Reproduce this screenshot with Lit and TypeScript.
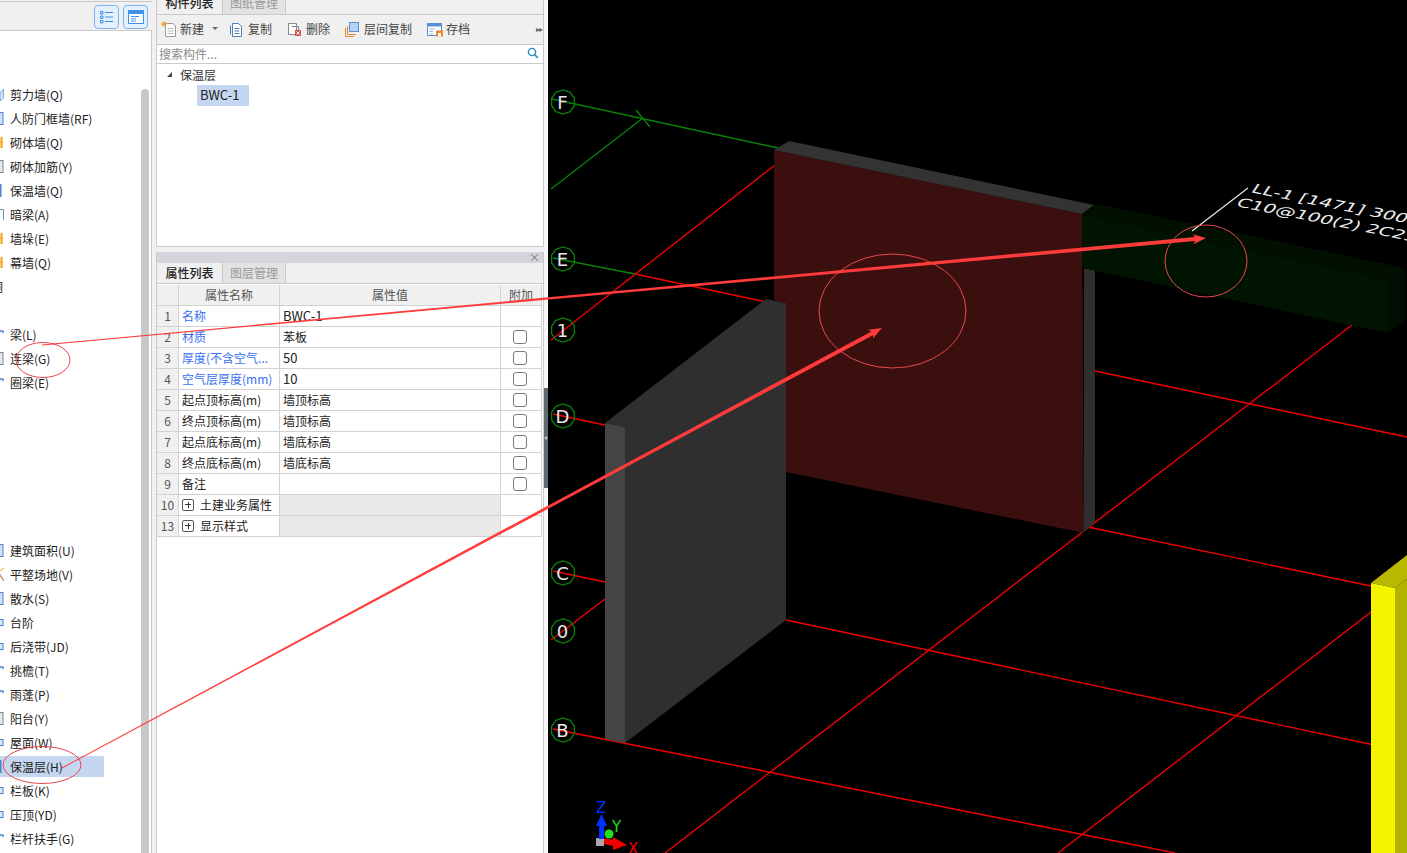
import { LitElement, html, css, svg } from 'lit';
import { customElement } from 'lit/decorators.js';

type LeftRow = { label?: string; icon?: string; selected?: boolean; clipped?: boolean };

const blank: LeftRow = {};

const LEFT_ROWS: LeftRow[] = [
  { label: '剪力墙(Q)', icon: 'shear' },
  { label: '人防门框墙(RF)', icon: 'box' },
  { label: '砌体墙(Q)', icon: 'brick' },
  { label: '砌体加筋(Y)', icon: 'greybox' },
  { label: '保温墙(Q)', icon: 'bar' },
  { label: '暗梁(A)', icon: 'cap' },
  { label: '墙垛(E)', icon: 'brick' },
  { label: '幕墙(Q)', icon: 'brick' },
  { label: '洞', clipped: true },
  blank,
  { label: '梁(L)', icon: 'tick' },
  { label: '连梁(G)', icon: 'greybox' },
  { label: '圈梁(E)', icon: 'tick' },
  blank, blank, blank, blank, blank, blank,
  { label: '建筑面积(U)', icon: 'box' },
  { label: '平整场地(V)', icon: 'site' },
  { label: '散水(S)', icon: 'box' },
  { label: '台阶', icon: 'small' },
  { label: '后浇带(JD)', icon: 'small' },
  { label: '挑檐(T)', icon: 'tick' },
  { label: '雨蓬(P)', icon: 'tick' },
  { label: '阳台(Y)', icon: 'greybox' },
  { label: '屋面(W)', icon: 'small' },
  { label: '保温层(H)', icon: 'bar', selected: true },
  { label: '栏板(K)', icon: 'small' },
  { label: '压顶(YD)', icon: 'small' },
  { label: '栏杆扶手(G)', icon: 'tick' },
];

type PropRow = {
  no: number;
  name: string;
  value?: string;
  blue?: boolean;
  check?: boolean;
  group?: boolean;
  latin?: boolean;
};

const PROPS: PropRow[] = [
  { no: 1, name: '名称', value: 'BWC-1', blue: true, latin: true },
  { no: 2, name: '材质', value: '苯板', blue: true, check: true },
  { no: 3, name: '厚度(不含空气...', value: '50', blue: true, check: true, latin: true },
  { no: 4, name: '空气层厚度(mm)', value: '10', blue: true, check: true, latin: true },
  { no: 5, name: '起点顶标高(m)', value: '墙顶标高', check: true },
  { no: 6, name: '终点顶标高(m)', value: '墙顶标高', check: true },
  { no: 7, name: '起点底标高(m)', value: '墙底标高', check: true },
  { no: 8, name: '终点底标高(m)', value: '墙底标高', check: true },
  { no: 9, name: '备注', check: true },
  { no: 10, name: '土建业务属性', group: true },
  { no: 13, name: '显示样式', group: true },
];

// grid lines of the 3D view, page coordinates
const RED_LINES = [
  [551, 340, 775, 165],
  [635, 274, 766, 302],
  [553, 414, 605, 425],
  [553, 571, 605, 582],
  [551, 640, 605, 599],
  [553, 729, 1175, 853],
  [1352, 325, 665, 853],
  [1371, 612, 1058, 853],
  [1095, 371, 1407, 437],
  [1088, 527, 1371, 586],
  [786, 620, 1407, 752],
];
const GREEN_LINES = [
  [552, 99, 778, 148],
  [551, 189, 643, 118],
  [636, 110, 650, 127],
  [553, 258, 635, 274],
];
const BUBBLES: [string, number][] = [
  ['F', 102], ['E', 259], ['1', 330], ['D', 416], ['C', 573], ['0', 631], ['B', 730],
];

function octagon(cx: number, cy: number, r: number) {
  const pts: string[] = [];
  for (let i = 0; i < 10; i++) {
    const a = (Math.PI * 2 * i) / 10 + Math.PI / 10;
    pts.push(`${(cx + r * Math.cos(a)).toFixed(1)},${(cy + r * Math.sin(a)).toFixed(1)}`);
  }
  return pts.join(' ');
}

// tapered hand-drawn arrow: thin tail, thick shaft, small head
function arrow(x1: number, y1: number, x2: number, y2: number) {
  const len = Math.hypot(x2 - x1, y2 - y1);
  const ux = (x2 - x1) / len;
  const uy = (y2 - y1) / len;
  const nx = -uy;
  const ny = ux;
  const p = (along: number, off: number) =>
    `${(x1 + ux * along + nx * off).toFixed(1)},${(y1 + uy * along + ny * off).toFixed(1)}`;
  const neck = len - 11;
  return [
    p(0, 0.4), p(neck, 2), p(neck - 2, 5), p(len, 0), p(neck - 2, -5), p(neck, -2), p(0, -0.4),
  ].join(' ');
}

function leftIcon(kind?: string) {
  switch (kind) {
    case 'shear':
      return svg`<path d="M0 7 3.5 3V12L0 15Z" fill="#d6e6f8" stroke="#7ba6d8"/>`;
    case 'box':
      return svg`<rect x="-4" y="2.5" width="7" height="12" fill="#cfe0f5" stroke="#4a86d0"/>`;
    case 'greybox':
      return svg`<rect x="-4" y="2.5" width="7" height="12" fill="#e8e8e8" stroke="#7c8794"/>`;
    case 'brick':
      return svg`<rect x="-2" y="3" width="5" height="11" fill="#fbd07a"/><path d="M0 8.5H3M1.5 3V14" stroke="#f0a020"/>`;
    case 'bar':
      return svg`<rect x="0" y="2" width="1.5" height="13" fill="#4a86d0"/>`;
    case 'cap':
      return svg`<path d="M0 3.5H3.5V14" fill="none" stroke="#6c8db5"/>`;
    case 'tick':
      return svg`<path d="M0 5H3V7" fill="none" stroke="#4a86d0" stroke-width="1.4"/>`;
    case 'small':
      return svg`<rect x="-3" y="5.5" width="6" height="6" fill="#dbe8f7" stroke="#4a86d0"/>`;
    case 'site':
      return svg`<path d="M0 5 4 2M0 10 4 15" fill="none" stroke="#f0a020"/><path d="M0 8 4 15" stroke="#8a97a8"/>`;
    default:
      return svg``;
  }
}

const TOOLS: { label: string; icon: unknown; caret?: boolean }[] = [
  {
    label: '新建',
    caret: true,
    icon: svg`<path d="M4.5 2.5H12L14.5 5V15.5H4.5Z" fill="#fff" stroke="#9a9a9a"/><path d="M6.5 7.5H12.5M6.5 10H12.5M6.5 12.5H12.5" stroke="#bbb"/><path d="M3 0V6M0 3H6M1 1 5 5M5 1 1 5" stroke="#f59a23"/>`,
  },
  {
    label: '复制',
    icon: svg`<path d="M3.5 2.5H9.5L12.5 5.5V15.5H3.5Z" fill="#fff" stroke="#4d7fb8"/><path d="M1.5 4.5V13.5M5.5 7.5H10.5M5.5 10H10.5M5.5 12.5H10.5" stroke="#4d7fb8"/>`,
  },
  {
    label: '删除',
    icon: svg`<path d="M1.5 2.5H9.5V13.5H1.5Z" fill="#fff" stroke="#8a8a8a"/><path d="M4.5 5.5H11.5V9" fill="none" stroke="#8a8a8a"/><rect x="8" y="9" width="6" height="6" fill="#d9534f"/><path d="M9.5 10.5 12.5 13.5M12.5 10.5 9.5 13.5" stroke="#fff"/>`,
  },
  {
    label: '层间复制',
    icon: svg`<path d="M.5 7V15.5H9" fill="none" stroke="#e8862a"/><path d="M2.5 5V13.5H11" fill="none" stroke="#e8862a"/><rect x="4.5" y="1.5" width="9" height="9" fill="#b5d3f7" stroke="#5b8fd0"/>`,
  },
  {
    label: '存档',
    icon: svg`<rect x=".5" y="2.5" width="14" height="12" fill="#fff" stroke="#5b8fd0"/><rect x=".5" y="2.5" width="14" height="3" fill="#5b8fd0"/><path d="M2.5 8H8M2.5 10.5H6M2.5 13H6" stroke="#8fb3dc"/><rect x="9" y="9.5" width="7" height="6" fill="#e8862a"/><rect x="11" y="12" width="3" height="3.5" fill="#fff"/>`,
  },
];

@customElement('app-root')
export class AppRoot extends LitElement {
  static styles = css`
    :host {
      display: block;
      position: relative;
      width: 1407px;
      height: 853px;
      overflow: hidden;
      background: #f1f1f1;
      font-family: 'Noto Sans CJK SC', 'Noto Sans', sans-serif;
      font-size: 12px;
      color: #222;
    }
    .shell {
      display: flex;
      height: 853px;
    }

    /* left tree */
    .left {
      width: 152px;
      flex: none;
      display: flex;
      flex-direction: column;
      overflow: hidden;
    }
    .left-bar {
      height: 30px;
      flex: none;
      box-sizing: border-box;
      margin-top: 1px;
      border-top: 1px solid #c9c9c9;
      border-bottom: 1px solid #c9c9c9;
      background: #f0f0f0;
      display: flex;
      justify-content: flex-end;
      align-items: center;
      gap: 4px;
      padding: 2px 4px 0 0;
    }
    .mode {
      width: 25px;
      height: 24px;
      box-sizing: border-box;
      border: 1px solid #7db4ee;
      border-radius: 4px;
      background: #e3f0fd;
      display: flex;
      align-items: center;
      justify-content: center;
    }
    .left-body {
      flex: 1;
      position: relative;
      background: #fff;
      border-right: 1px solid #c9c9c9;
      padding-top: 51px;
      overflow: hidden;
    }
    .left-row {
      display: flex;
      align-items: center;
      width: 104px;
      height: 24px;
      white-space: nowrap;
    }
    .left-row.selected {
      background: linear-gradient(#fff 2px, #c5d7f0 2px, #c5d7f0 23px, #fff 23px);
    }
    .left-row svg {
      flex: none;
      width: 10px;
      height: 17px;
    }
    .left-row .clip {
      margin-left: -9px;
    }
    .left-scroll {
      position: absolute;
      top: 58px;
      bottom: 0;
      left: 141px;
      width: 8px;
      border-radius: 4px 4px 0 0;
      background: #c8c8c8;
    }

    /* middle panels */
    .mid {
      width: 388px;
      flex: none;
      margin-left: 4px;
      display: flex;
      flex-direction: column;
      box-sizing: border-box;
    }
    .panel {
      border: 1px solid #c9c9c9;
      border-top: none;
      background: #fff;
      box-sizing: border-box;
      overflow: hidden;
      display: flex;
      flex-direction: column;
    }
    .panel.top {
      height: 247px;
      flex: none;
    }
    .panel.bottom {
      flex: 1;
      margin-top: 5px;
      border-bottom: none;
    }
    .tabs {
      display: flex;
      flex: none;
      height: 21px;
      box-sizing: border-box;
      background: #f0f0f0;
      border-bottom: 1px solid #c9c9c9;
    }
    .panel.top .tabs {
      margin-top: -6px;
    }
    .panel.top .tab {
      line-height: 18px;
    }
    .tab {
      width: 65px;
      text-align: center;
      line-height: 20px;
      color: #222;
      font-weight: 500;
    }
    .tab.off {
      width: 64px;
      background: #e2e2e2;
      color: #9a9a9a;
      border-left: 1px solid #c9c9c9;
      border-right: 1px solid #c9c9c9;
      box-sizing: border-box;
      font-weight: 400;
    }
    .tools {
      height: 30px;
      flex: none;
      box-sizing: border-box;
      background: #f0f0f0;
      border-bottom: 1px solid #c9c9c9;
      display: flex;
      align-items: center;
      padding: 0 0 2px 4px;
      color: #444;
    }
    .tool {
      display: flex;
      align-items: center;
      gap: 3px;
      margin-right: 15px;
    }
    .tool svg {
      width: 16px;
      height: 16px;
      flex: none;
    }
    .caret {
      margin-left: 5px;
      border: 3px solid transparent;
      border-top: 3px solid #666;
      margin-top: 3px;
      margin-right: -4px;
    }
    .more {
      margin-left: auto;
      margin-right: 1px;
      font-size: 8px;
      letter-spacing: -1px;
      color: #666;
    }
    .search {
      height: 19px;
      flex: none;
      box-sizing: border-box;
      border-bottom: 1px solid #c9c9c9;
      display: flex;
      align-items: center;
      justify-content: space-between;
      padding: 0 4px 2px 2px;
      color: #8a8a8a;
    }
    .tree {
      flex: 1;
      padding-left: 10px;
    }
    .tree-head {
      display: flex;
      align-items: center;
      height: 21px;
      gap: 8px;
      color: #333;
    }
    .tree-head i {
      width: 0;
      height: 0;
      border-left: 5px solid transparent;
      border-bottom: 5px solid #444;
    }
    .tree-item {
      margin-left: 30px;
      width: 52px;
      height: 21px;
      line-height: 19px;
      background: #c5d7f0;
      text-indent: 3px;
      font-size: 13px;
    }
    .dock {
      height: 11px;
      flex: none;
      background: #d3d5da;
      color: #777;
      font-size: 11px;
      line-height: 10px;
      text-align: right;
      padding-right: 3px;
    }

    /* property grid */
    .props {
      flex: 1;
      margin-top: 1px;
      display: grid;
      grid-template-columns: 22px 101px 221px 41px;
      grid-auto-rows: 21px;
      align-content: start;
      position: relative;
    }
    .props > div {
      box-sizing: border-box;
      border-right: 1px solid #d2d2d2;
      border-bottom: 1px solid #d2d2d2;
      display: flex;
      align-items: center;
      padding-bottom: 1px;
      white-space: nowrap;
      overflow: hidden;
    }
    .props .hd {
      background: #f0f0f0;
      color: #555;
      justify-content: center;
    }
    .props .no {
      background: #f0f0f0;
      color: #555;
      justify-content: center;
    }
    .props .nm {
      padding-left: 3px;
      color: #222;
    }
    .props .nm.blue {
      color: #3a6ff2;
    }
    .props .vl {
      padding-left: 3px;
      color: #222;
    }
    .props .vl.latin {
      font-size: 13px;
    }
    .props .vl.group {
      background: #e9e9e9;
    }
    .props .ck {
      justify-content: center;
      padding-right: 2px;
    }
    .check {
      width: 14px;
      height: 14px;
      box-sizing: border-box;
      border: 1px solid #7a7a7a;
      border-radius: 3px;
      background: #fff;
    }
    .plus {
      width: 12px;
      height: 12px;
      box-sizing: border-box;
      border: 1px solid #555;
      border-radius: 2px;
      margin: 0 6px 0 0;
      position: relative;
      flex: none;
    }
    .plus::before,
    .plus::after {
      content: '';
      position: absolute;
      background: #333;
    }
    .plus::before {
      left: 2px;
      right: 2px;
      top: 4.5px;
      height: 1px;
    }
    .plus::after {
      top: 2px;
      bottom: 2px;
      left: 4.5px;
      width: 1px;
    }
    .gutter {
      position: absolute;
      left: 0;
      top: 0;
      bottom: 0;
      width: 22px;
      box-sizing: border-box;
      background: #f0f0f0;
      border-right: 1px solid #d2d2d2;
      z-index: -1;
    }

    /* splitter */
    .split {
      width: 4px;
      flex: none;
      background: #f7f7f7;
      display: flex;
      align-items: center;
    }
    .split div {
      width: 4px;
      height: 100px;
      margin-top: 23px;
      background: #626a72;
      display: flex;
      align-items: center;
    }
    .split i {
      border: 2.5px solid transparent;
      border-right: 3px solid #c8cbd0;
      border-left: none;
      margin-top: -1px;
    }

    /* 3D view */
    .view {
      width: 859px;
      flex: none;
      background: #000;
    }
    .view svg {
      display: block;
    }
    .bubble-text {
      font-family: 'DejaVu Sans', sans-serif;
      font-size: 18px;
      fill: #e8e8e8;
      text-anchor: middle;
    }
    .cad-text {
      font-family: 'DejaVu Sans', sans-serif;
      font-size: 13px;
      fill: #eee;
    }
    .axis-text {
      font-family: 'DejaVu Sans', sans-serif;
      font-size: 15px;
    }
    .overlay {
      position: absolute;
      left: 0;
      top: 0;
      pointer-events: none;
    }
  `;

  private renderLeft() {
    return html`
      <div class="left">
        <div class="left-bar">
          <div class="mode">
            <svg width="15" height="14" viewBox="0 0 15 14">
              <path d="M1.5 1.5H4V4H1.5ZM1.5 6H4V8.5H1.5ZM1.5 10.5H4V13H1.5Z" fill="none" stroke="#3f8fe6"/>
              <path d="M6 2.5H14M6 7H14M6 11.5H14" stroke="#3f8fe6"/>
            </svg>
          </div>
          <div class="mode">
            <svg width="16" height="14" viewBox="0 0 16 14">
              <rect x=".5" y=".5" width="15" height="13" fill="#fff" stroke="#3f8fe6"/>
              <rect x=".5" y=".5" width="15" height="3.5" fill="#3f8fe6"/>
              <path d="M3 6.5H11M3 8.8H8M3 11H8" stroke="#3f8fe6"/>
            </svg>
          </div>
        </div>
        <div class="left-body">
          ${LEFT_ROWS.map(
            (r) => html`
              <div class="left-row ${r.selected ? 'selected' : ''}">
                ${r.clipped
                  ? html`<span class="clip">${r.label}</span>`
                  : html`<svg viewBox="0 0 10 17">${leftIcon(r.icon)}</svg><span>${r.label}</span>`}
              </div>
            `,
          )}
          <div class="left-scroll"></div>
        </div>
      </div>
    `;
  }

  private renderTop() {
    return html`
      <div class="panel top">
        <div class="tabs">
          <div class="tab">构件列表</div>
          <div class="tab off">图纸管理</div>
        </div>
        <div class="tools">
          ${TOOLS.map(
            (t) => html`
              <div class="tool">
                <svg viewBox="0 0 16 16">${t.icon}</svg>
                <span>${t.label}</span>
                ${t.caret ? html`<i class="caret"></i>` : ''}
              </div>
            `,
          )}
          <span class="more">▸▸</span>
        </div>
        <div class="search">
          <span>搜索构件...</span>
          <svg width="12" height="12" viewBox="0 0 12 12">
            <circle cx="5" cy="5" r="3.6" fill="none" stroke="#2b8ab8" stroke-width="1.4"/>
            <path d="M7.6 7.6 11 11" stroke="#2b8ab8" stroke-width="1.6"/>
          </svg>
        </div>
        <div class="tree">
          <div class="tree-head"><i></i><span>保温层</span></div>
          <div class="tree-item">BWC-1</div>
        </div>
      </div>
    `;
  }

  private renderProps() {
    return html`
      <div class="panel bottom">
        <div class="dock">×</div>
        <div class="tabs">
          <div class="tab">属性列表</div>
          <div class="tab off">图层管理</div>
        </div>
        <div class="props">
          <div class="hd"></div>
          <div class="hd">属性名称</div>
          <div class="hd">属性值</div>
          <div class="hd">附加</div>
          ${PROPS.map(
            (p) => html`
              <div class="no">${p.no}</div>
              <div class="nm ${p.blue ? 'blue' : ''}">
                ${p.group ? html`<span class="plus"></span>` : ''}${p.name}
              </div>
              <div class="vl ${p.group ? 'group' : ''} ${p.latin ? 'latin' : ''}">${p.value ?? ''}</div>
              <div class="ck">${p.check ? html`<span class="check"></span>` : ''}</div>
            `,
          )}
          <div class="gutter"></div>
        </div>
      </div>
    `;
  }

  private renderView() {
    return html`
      <div class="view">
        <svg width="859" height="853" viewBox="548 0 859 853">
          ${RED_LINES.map(
            (l) => svg`<line x1=${l[0]} y1=${l[1]} x2=${l[2]} y2=${l[3]} stroke="#f00000" stroke-width="1.4"/>`,
          )}
          ${GREEN_LINES.map(
            (l) => svg`<line x1=${l[0]} y1=${l[1]} x2=${l[2]} y2=${l[3]} stroke="#0a800a" stroke-width="1.4"/>`,
          )}

          <polygon points="774,150 1082,214 1084,533 786,472 786,303 774,300" fill="#3c0f0f"/>
          <polygon points="774,150 789,141 1094,205 1082,214" fill="#333333"/>
          <polygon points="1084,269 1095,269 1095,522 1084,532" fill="#2f2f2f"/>

          <polygon points="1082,215 1097,204 1405,268 1388,280" fill="#011001"/>
          <polygon points="1082,215 1388,280 1388,333 1082,268" fill="#011401"/>
          <polygon points="1388,280 1405,268 1405,321 1388,333" fill="#010e01"/>

          <polygon points="605,423 766,299 786,303 786,620 625,743 625,427" fill="#2f2f2f"/>
          <polygon points="605,423 625,427 625,743 605,739" fill="#444444"/>

          <polygon points="1371,583 1407,555 1407,579 1395,588" fill="#b8b800"/>
          <polygon points="1395,588 1407,579 1407,853 1395,853" fill="#b3b300"/>
          <polygon points="1371,583 1395,588 1395,853 1371,853" fill="#f4f400"/>

          <line x1="1192" y1="231" x2="1248" y2="188" stroke="#e8e8e8" stroke-width="1.2"/>
          <text class="cad-text" transform="matrix(1.5 .3 -.6 .9 1250 192)">LL-1 [1471] 300</text>
          <text class="cad-text" transform="matrix(1.5 .3 -.6 .9 1235 206)">C10@100(2) 2C25</text>

          ${BUBBLES.map(
            ([t, y]) => svg`
              <polygon points=${octagon(563, y, 12)} fill="none" stroke="#0a800a" stroke-width="1.3"/>
              <text class="bubble-text" x="562.5" y=${y + 6.5}>${t}</text>
            `,
          )}

          <rect x="596" y="838" width="8" height="8" fill="#a8a8a8"/>
          <rect x="599" y="824" width="5" height="15" fill="#0030ff"/>
          <polygon points="601.5,814 607,826 596,826" fill="#0030ff"/>
          <text class="axis-text" x="596" y="813" fill="#0030ff">Z</text>
          <circle cx="609" cy="834" r="4.5" fill="#1ee01e"/>
          <text class="axis-text" x="612" y="832" fill="#1ee01e">Y</text>
          <polygon points="604,838 613,840 613,837 627,845 613,850 613,846 604,844" fill="#f00000"/>
          <text class="axis-text" x="628" y="854" fill="#f00000">X</text>
        </svg>
      </div>
    `;
  }

  render() {
    return html`
      <div class="shell">
        ${this.renderLeft()}
        <div class="mid">${this.renderTop()} ${this.renderProps()}</div>
        <div class="split"><div><i></i></div></div>
        ${this.renderView()}
      </div>
      <svg class="overlay" width="1407" height="853" viewBox="0 0 1407 853">
        <polygon points=${arrow(42, 345, 1206, 238)} fill="#ff3b3b"/>
        <polygon points=${arrow(62, 768, 882, 328)} fill="#ff3b3b"/>
        <g fill="none" stroke="#e8474c" stroke-width="1">
          <ellipse cx="43" cy="360" rx="27" ry="17.5"/>
          <ellipse cx="42" cy="765" rx="39" ry="18.5"/>
          <ellipse cx="892.5" cy="311" rx="73.5" ry="57"/>
          <ellipse cx="1206" cy="261" rx="41" ry="36"/>
        </g>
      </svg>
    `;
  }
}

declare global {
  interface HTMLElementTagNameMap {
    'app-root': AppRoot;
  }
}
